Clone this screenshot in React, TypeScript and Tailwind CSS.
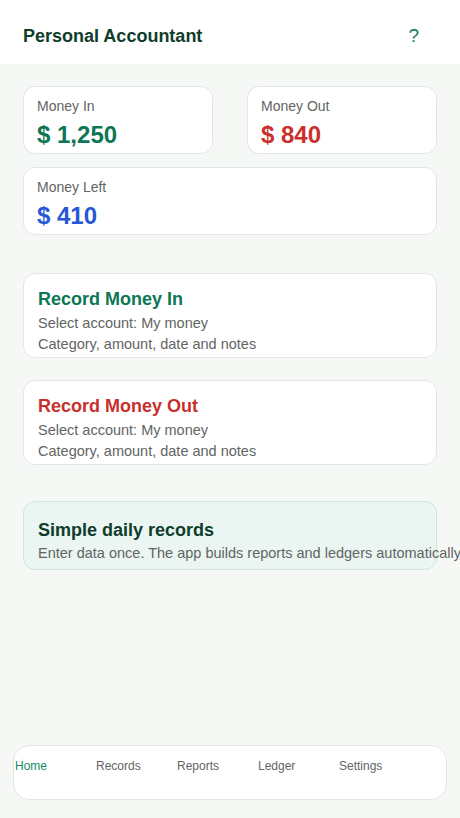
import React from 'react';

const NAV = ['Home', 'Records', 'Reports', 'Ledger', 'Settings'];

function StatCard({ label, value, color }: { label: string; value: string; color: string }) {
  return (
    <div className="h-[68px] rounded-[12px] border border-[#e2e6e4] bg-white px-[13px] pt-[10px]">
      <p className="text-[14px] leading-[18px] text-[#616563]">{label}</p>
      <p className={`mt-[5px] text-[24px] font-bold leading-[29px] ${color}`}>{value}</p>
    </div>
  );
}

function RecordCard({ title, color }: { title: string; color: string }) {
  return (
    <div className="h-[85px] overflow-hidden rounded-[12px] border border-[#e2e6e4] bg-white px-[14px] pt-[14px]">
      <p className={`text-[18px] font-bold leading-[22px] ${color}`}>{title}</p>
      <p className="mt-[3px] text-[14.5px] leading-[21px] text-[#616563]">Select account: My money</p>
      <p className="text-[14.5px] leading-[21px] text-[#616563]">Category, amount, date and notes</p>
    </div>
  );
}

export default function App() {
  return (
    <div
      className="flex h-[818px] w-[460px] flex-col bg-[#f6f8f6]"
      style={{ fontFamily: '"Liberation Sans", Arial, sans-serif' }}
    >
      {/* Header */}
      <div className="flex h-[64px] shrink-0 items-center justify-between bg-white pl-[23px] pr-[41px] pt-[8px]">
        <h1 className="text-[18px] font-bold text-[#0f3d2c]">Personal Accountant</h1>
        <span className="text-[19px] text-[#0f7a5a]">?</span>
      </div>

      {/* Content */}
      <div className="flex flex-1 flex-col px-[23px] pt-[22px]">
        <div className="grid grid-cols-2 gap-x-[34px]">
          <StatCard label="Money In" value="$ 1,250" color="text-[#0e7555]" />
          <StatCard label="Money Out" value="$ 840" color="text-[#c9302c]" />
        </div>
        <div className="mt-[13px]">
          <StatCard label="Money Left" value="$ 410" color="text-[#2658d6]" />
        </div>

        <div className="mt-[38px] flex flex-col gap-[22px]">
          <RecordCard title="Record Money In" color="text-[#0e7555]" />
          <RecordCard title="Record Money Out" color="text-[#c9302c]" />
        </div>

        <div className="mt-[36px] h-[69px] rounded-[12px] border border-[#cfe6dc] bg-[#ebf6f2] px-[14px] pt-[17px]">
          <p className="text-[18px] font-bold leading-[22px] text-[#0f3d2c]">Simple daily records</p>
          <p className="mt-[2px] whitespace-nowrap text-[14.5px] leading-[20px] text-[#616563]">
            Enter data once. The app builds reports and ledgers automatically
          </p>
        </div>
      </div>

      {/* Bottom nav */}
      <div className="px-[13px] pb-[18px]">
        <div className="flex h-[55px] rounded-[16px] border border-[#e2e6e4] bg-white pl-[1px] pt-[12px]">
          {NAV.map((n, i) => (
            <span
              key={n}
              className={`w-[81px] text-[12px] leading-[16px] ${i === 0 ? 'text-[#168a68]' : 'text-[#616563]'}`}
            >
              {n}
            </span>
          ))}
        </div>
      </div>
    </div>
  );
}
